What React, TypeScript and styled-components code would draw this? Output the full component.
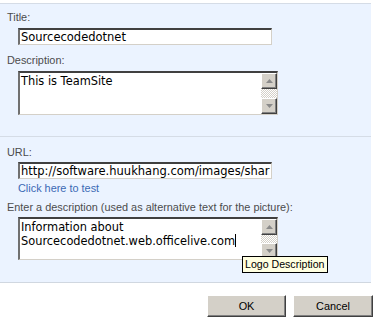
import React from "react";
import styled, { createGlobalStyle } from "styled-components";

const Global = createGlobalStyle`
  html, body { margin: 0; padding: 0; background: #ffffff; }
  body { width: 375px; height: 323px; overflow: hidden; }
`;

const Page = styled.div`
  width: 375px;
  height: 323px;
  padding-top: 3px;
  box-sizing: border-box;
  font-family: "Liberation Sans", Arial, sans-serif;
  font-size: 10.9px;
`;

const Panel = styled.div`
  width: 371px;
  background: #ebf3ff;
  border-top: 1px solid #d5dce6;
  border-bottom: 1px solid #d0d7e0;
  box-sizing: border-box;
`;

const Section = styled.div<{ $top: number; $bottom: number }>`
  display: flex;
  flex-direction: column;
  padding: ${(p) => p.$top}px 0 ${(p) => p.$bottom}px 7px;
`;

const Separator = styled.div`
  height: 1px;
  background: #d5dce6;
`;

const Label = styled.div<{ $gap?: number }>`
  color: #4c4c4c;
  line-height: 13px;
  margin-top: ${(p) => p.$gap ?? 0}px;
  white-space: nowrap;
`;

const Link = styled.a<{ $gap?: number }>`
  color: #3b6ab5;
  line-height: 13px;
  margin: ${(p) => p.$gap ?? 0}px 0 0 11px;
  text-decoration: none;
  cursor: pointer;
  align-self: flex-start;
`;

const Field = styled.div<{ $gap?: number }>`
  position: relative;
  margin: ${(p) => p.$gap ?? 0}px 0 0 11px;
  align-self: flex-start;
`;

const TextInput = styled.input`
  display: block;
  width: 254px;
  height: 17px;
  box-sizing: border-box;
  margin: 0;
  padding: 0 0 0 1px;
  background: #ffffff;
  color: #000000;
  font-family: "DejaVu Sans", Verdana, sans-serif;
  font-size: 11.5px;
  border-style: solid;
  border-width: 2px 1px 1px 2px;
  border-color: #404040 #d4d0c8 #d4d0c8 #707070;
  outline: none;
`;

const TextBox = styled.div<{ $h: number }>`
  display: flex;
  width: 260px;
  height: ${(p) => p.$h}px;
  box-sizing: border-box;
  background: #ffffff;
  border-style: solid;
  border-width: 2px 1px 1px 2px;
  border-color: #404040 #d4d0c8 #d4d0c8 #707070;
`;

const TextArea = styled.div`
  flex: 1;
  padding: 1px 0 0 1px;
  font-family: "DejaVu Sans", Verdana, sans-serif;
  font-size: 11.4px;
  line-height: 14px;
  color: #000000;
  white-space: pre;
  overflow: hidden;
`;

const Caret = styled.span`
  display: inline-block;
  width: 1px;
  height: 13px;
  background: #000;
  vertical-align: -2px;
`;

const ScrollBar = styled.div`
  width: 16px;
  display: flex;
  flex-direction: column;
  background-color: #f4f3ef;
  background-image: repeating-conic-gradient(#d4d0c8 0 25%, #ffffff 0 50%);
  background-size: 2px 2px;
`;

const Track = styled.div`
  flex: 1;
`;

const ScrollButton = styled.div`
  height: 16px;
  box-sizing: border-box;
  background: #d4d0c8;
  border-style: solid;
  border-width: 1px;
  border-color: #ffffff #404040 #404040 #ffffff;
  box-shadow: inset -1px -1px 0 #808080;
  display: flex;
  align-items: center;
  justify-content: center;
`;

const Arrow = ({ down }: { down?: boolean }) => (
  <svg width="7" height="4" viewBox="0 0 7 4">
    {down ? (
      <path d="M0 0h7L3.5 4z" fill="#8a8a8a" />
    ) : (
      <path d="M0 4h7L3.5 0z" fill="#8a8a8a" />
    )}
  </svg>
);

const Tooltip = styled.div`
  position: absolute;
  left: 224px;
  top: 39px;
  padding: 1px 2px 1px 2px;
  background: #ffffe1;
  border: 1px solid #000000;
  color: #000000;
  font-family: "Liberation Sans", Arial, sans-serif;
  font-size: 10.6px;
  line-height: 13px;
  white-space: nowrap;
`;

const ButtonBar = styled.div`
  display: flex;
  justify-content: flex-end;
  gap: 7px;
  padding: 12px 2px 0 0;
`;

const Button = styled.button<{ $w: number }>`
  width: ${(p) => p.$w}px;
  height: 22px;
  box-sizing: border-box;
  margin: 0;
  padding: 0;
  background: #d4d0c8;
  color: #000000;
  font-family: "Liberation Sans", Arial, sans-serif;
  font-size: 10.9px;
  border-style: solid;
  border-width: 1px;
  border-color: #ffffff #404040 #404040 #ffffff;
  box-shadow: inset -1px -1px 0 #808080;
`;

const Scroll = () => (
  <ScrollBar>
    <ScrollButton>
      <Arrow />
    </ScrollButton>
    <Track />
    <ScrollButton>
      <Arrow down />
    </ScrollButton>
  </ScrollBar>
);

export default function App() {
  return (
    <>
      <Global />
      <Page>
        <Panel>
          <Section $top={7} $bottom={21}>
            <Label>Title:</Label>
            <Field $gap={4}>
              <TextInput readOnly value="Sourcecodedotnet" />
            </Field>
            <Label $gap={9}>Description:</Label>
            <Field $gap={4}>
              <TextBox $h={44}>
                <TextArea>This is TeamSite</TextArea>
                <Scroll />
              </TextBox>
            </Field>
          </Section>
          <Separator />
          <Section $top={9} $bottom={22}>
            <Label>URL:</Label>
            <Field $gap={3}>
              <TextInput readOnly value="http://software.huukhang.com/images/shar" />
            </Field>
            <Link $gap={3}>Click here to test</Link>
            <Label $gap={6}>Enter a description (used as alternative text for the picture):</Label>
            <Field $gap={3}>
              <TextBox $h={43}>
                <TextArea>
                  {"Information about\nSourcecodedotnet.web.officelive.com"}
                  <Caret />
                </TextArea>
                <Scroll />
              </TextBox>
              <Tooltip>Logo Description</Tooltip>
            </Field>
          </Section>
        </Panel>
        <ButtonBar>
          <Button $w={79}>OK</Button>
          <Button $w={80}>Cancel</Button>
        </ButtonBar>
      </Page>
    </>
  );
}
